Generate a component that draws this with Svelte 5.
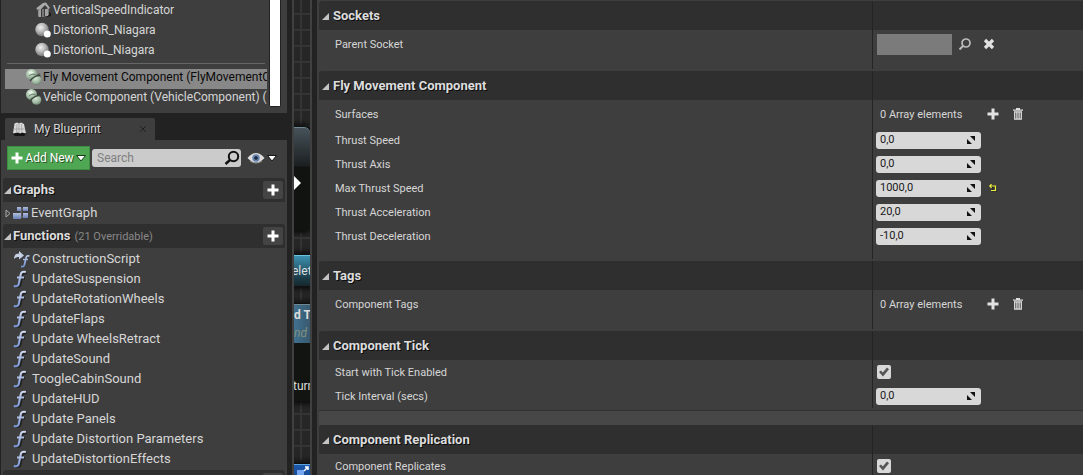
<script>
  let components = [
    { name: 'VerticalSpeedIndicator', icon: 'house' },
    { name: 'DistorionR_Niagara', icon: 'sphere' },
    { name: 'DistorionL_Niagara', icon: 'sphere' }
  ];
  let logic = [
    { name: 'Fly Movement Component (FlyMovementComponent)', selected: true },
    { name: 'Vehicle Component (VehicleComponent) (Inherited)', selected: false }
  ];
  let functions = [
    'ConstructionScript', 'UpdateSuspension', 'UpdateRotationWheels', 'UpdateFlaps',
    'Update WheelsRetract', 'UpdateSound', 'ToogleCabinSound', 'UpdateHUD',
    'Update Panels', 'Update Distortion Parameters', 'UpdateDistortionEffects'
  ];
  let sections = [
    { title: 'Sockets', rows: [{ id: 'socket', label: 'Parent Socket', kind: 'socket' }] },
    {
      title: 'Fly Movement Component',
      rows: [
        { id: 'surfaces', label: 'Surfaces', kind: 'array' },
        { id: 'speed', label: 'Thrust Speed', kind: 'number', value: '0,0' },
        { id: 'axis', label: 'Thrust Axis', kind: 'number', value: '0,0' },
        { id: 'max', label: 'Max Thrust Speed', kind: 'number', value: '1000,0', changed: true },
        { id: 'accel', label: 'Thrust Acceleration', kind: 'number', value: '20,0' },
        { id: 'decel', label: 'Thrust Deceleration', kind: 'number', value: '-10,0' }
      ]
    },
    { title: 'Tags', rows: [{ id: 'tags', label: 'Component Tags', kind: 'array' }] },
    {
      title: 'Component Tick',
      advanced: true,
      rows: [
        { id: 'tick', label: 'Start with Tick Enabled', kind: 'check' },
        { id: 'interval', label: 'Tick Interval (secs)', kind: 'number', value: '0,0' }
      ]
    },
    { title: 'Component Replication', rows: [{ id: 'replicates', label: 'Component Replicates', kind: 'check' }] }
  ];
</script>

{#snippet plus()}
  <svg width="12" height="12" viewBox="0 0 12 12" aria-hidden="true"><path d="M4.500.5h3v4h4v3h-4v4h-3v-4h-4v-3h4z" fill="currentColor" /></svg>
{/snippet}

{#snippet fn()}
  <svg class="fn" width="16" height="18" viewBox="0 0 16 18" aria-hidden="true">
    <path d="M3 15.500c2 .8 3.200 0 3.700-2.500L8.200 5c.5-2.500 2-3.300 4.300-2.500M5 7.500h6" transform="translate(1 1)" fill="none" stroke="#222" stroke-width="2" />
    <path d="M.8 16c3 .8 4.700 0 5.200-3L7.600 5c.5-2.800 2-3.700 5.200-3M4 7.500h7" fill="none" stroke="url(#fnfill)" stroke-width="2" />
  </svg>
{/snippet}

<svg class="defs" width="0" height="0" aria-hidden="true">
  <defs>
    <linearGradient id="fnfill" gradientUnits="userSpaceOnUse" x1="0" y1="0" x2="0" y2="18"><stop offset="0" stop-color="#dbe2f2" /><stop offset="1" stop-color="#6f8fd4" /></linearGradient>
    <radialGradient id="ball" cx=".4" cy=".35" r=".65"><stop offset="0" stop-color="#eee" /><stop offset=".5" stop-color="#b9b9b9" /><stop offset="1" stop-color="#777" /></radialGradient>
    <radialGradient id="green" cx=".4" cy=".3" r=".8"><stop offset="0" stop-color="#d5e8d5" /><stop offset=".6" stop-color="#a0b8a2" /><stop offset="1" stop-color="#5d725f" /></radialGradient>
    <linearGradient id="tile" x1="0" y1="0" x2="0" y2="1"><stop offset="0" stop-color="#b4bfdc" /><stop offset="1" stop-color="#667eb8" /></linearGradient>
  </defs>
</svg>

<div class="editor">
  <aside class="side">
    <section class="tree">
      <div class="list">
        {#each components as item}
          <div class="node deep">
            {#if item.icon === 'house'}
              <svg width="18" height="18" viewBox="0 0 18 18" aria-hidden="true">
                <path d="M11 10l5 2v3l-4 1z" fill="#1c1c1c" />
                <path d="M3 8v7l3 1V9zM8 8v8l6-2V7z" fill="#777" />
                <path d="M1.500 7L8 2l3-.5L15 7l-1.500 1L10 4 5 9.500 4 8 2 9z" fill="#aaa" />
                <path d="M6 8.500L9.500 5 12 8v7H6z" fill="#3a3a3a" /><path d="M3.500 9h2.500v7H3.500zM10 8h3v7h-3z" fill="#a3a3a3" /><path d="M7 8h2v8H7z" fill="#777" />
              </svg>
            {:else}
              <svg width="18" height="18" viewBox="0 0 18 18" aria-hidden="true">
                <circle cx="7" cy="8.500" r="6.700" fill="url(#ball)" /><circle cx="12.300" cy="13" r="3.500" fill="#fff" />
              </svg>
            {/if}
            <span>{item.name}</span>
          </div>
        {/each}
        <hr />
        {#each logic as item}
          <div class="node logic" class:selected={item.selected}>
            <svg width="18" height="18" viewBox="0 0 18 18" aria-hidden="true">
              <path d="M9 8l6-3 1 5-6 7z" fill="#333" opacity=".5" />
              <circle cx="6.500" cy="6.500" r="5.500" fill="url(#green)" /><circle cx="11.500" cy="12" r="4.800" fill="url(#green)" />
              <path d="M5 13Q9 7.500 15 7.500" fill="none" stroke="#3b4a3c" stroke-width="1.300" /><path d="M3 5l3-2 3 1.500-3 1.500z" fill="#eaf6ea" /><path d="M4 8l3-2 4 1" fill="none" stroke="#6b806c" />
            </svg>
            <span>{item.name}</span>
          </div>
        {/each}
      </div>
      <div class="scroll"></div>
    </section>

    <div class="tabs">
      <div class="tab">
        <svg width="16" height="16" viewBox="0 0 16 16" aria-hidden="true">
          <path d="M1 12h15l-3 3H4z" fill="#141414" />
          <path d="M3.500 2.500l2.500-1 2 1 2-1 3 1.500 2 9.500-4-1-2 1-2-1-5 1z" fill="#d8d8d8" />
          <path d="M6 3l-.5 9M8 3v9M10.500 3l.5 9M2.500 8h11" stroke="#999" stroke-width=".7" />
        </svg>
        <span>My Blueprint</span>
        <button class="close" aria-label="Close"><svg width="8" height="8" viewBox="0 0 8 8"><path d="M1 1l6 6M7 1L1 7" stroke="#222" /></svg></button>
      </div>
    </div>

    <section class="blueprint">
      <div class="tools">
        <button class="add">
          {@render plus()}
          <span>Add New</span>
          <svg width="10" height="8" viewBox="0 0 10 8" aria-hidden="true"><path d="M.5 1.500h9L5 7z" fill="#fff" stroke="#163f19" /></svg>
        </button>
        <div class="search">
          <input type="text" placeholder="Search" aria-label="Search" />
          <svg width="16" height="16" viewBox="0 0 16 16" aria-hidden="true"><circle cx="9.500" cy="6.500" r="4.700" fill="none" stroke="#111" stroke-width="2" /><path d="M6 10l-4.500 4" stroke="#111" stroke-width="2.500" /></svg>
        </div>
        <button class="view" aria-label="View options">
          <svg width="18" height="14" viewBox="0 0 18 14"><path d="M.5 7Q9-3 17.500 7 9 16 .5 7z" fill="#ddd" /><path d="M3 10q6 4 12 0" fill="none" stroke="#999" /><circle cx="9" cy="7" r="3.700" fill="#6582ac" /><circle cx="9" cy="7" r="1.800" fill="#182335" /></svg>
          <svg width="10" height="8" viewBox="0 0 10 8"><path d="M.5 1.500h9L5 7z" fill="#fff" stroke="#171717" /></svg>
        </button>
      </div>

      <div class="category">
        <svg width="7" height="7" viewBox="0 0 7 7" aria-hidden="true"><path d="M7 0v7H0z" fill="#c4c4c4" /></svg>
        <h2>Graphs</h2>
        <button aria-label="Add graph">{@render plus()}</button>
      </div>
      <div class="graph-row">
        <svg width="6" height="9" viewBox="0 0 6 9" aria-hidden="true"><path d="M1 1l4 3.500L1 8z" fill="none" stroke="#aaa" /></svg>
        <svg width="18" height="14" viewBox="0 0 18 14" aria-hidden="true">
          <path d="M5 3h7M9 4v7h4" fill="none" stroke="#777" />
          <rect x="5" y="1" width="4" height="4" fill="url(#tile)" /><rect x="11" y="1" width="5" height="4" fill="url(#tile)" /><rect x="1" y="7" width="8" height="6" fill="url(#tile)" /><rect x="11" y="7" width="5" height="5" fill="url(#tile)" />
        </svg>
        <span>EventGraph</span>
      </div>
      <div class="category">
        <svg width="7" height="7" viewBox="0 0 7 7" aria-hidden="true"><path d="M7 0v7H0z" fill="#c4c4c4" /></svg>
        <h2>Functions</h2>
        <small>(21 Overridable)</small>
        <button aria-label="Add function">{@render plus()}</button>
      </div>
      <ul>
        {#each functions as name, i}
          <li>
            {#if i === 0}
              <svg width="18" height="18" viewBox="0 0 18 18" aria-hidden="true">
                <path d="M8 16.500c2 .5 3 0 3.500-2L13 8c.4-2 1.500-2.500 3.500-2M10 9.500h5" fill="none" stroke="url(#fnfill)" stroke-width="1.700" />
                <path d="M1 9c0-4 2-5.500 5-5.500V1l5 4.500-5 4V7C4 7 2.500 7.500 1 9z" fill="#c6cfe3" />
              </svg>
            {:else}
              {@render fn()}
            {/if}
            <span>{name}</span>
          </li>
        {/each}
      </ul>
      <div class="category"><button aria-label="Add macro">{@render plus()}</button></div>
    </section>
  </aside>

  <div class="canvas">
    <div class="bp first"><svg width="8" height="14" viewBox="0 0 8 14" aria-hidden="true"><path d="M0 0l7 7-7 7z" fill="#fff" /></svg></div>
    <div class="bp second"><span>elet</span></div>
    <div class="bp third"><header><b>d T</b><i>nd</i></header><span>turn</span></div>
    <div class="bp fourth">
      <svg width="16" height="12" viewBox="0 0 16 12" aria-hidden="true"><path d="M3 5h7v5H3z" fill="#76a6f0" /><path d="M10 6l4-4M11 2h3v3" fill="none" stroke="#fff" stroke-width="1.500" /></svg>
    </div>
  </div>

  <main class="details">
    {#each sections as section}
      <section class="group" class:advanced={section.advanced}>
        <div class="head">
          <h2><svg width="7" height="7" viewBox="0 0 7 7" aria-hidden="true"><path d="M7 0v7H0z" fill="#c4c4c4" /></svg>{section.title}</h2>
          <div class="cell"></div>
        </div>
        {#each section.rows as row}
          <div class="row {row.kind}">
            {#if row.kind === 'number' || row.kind === 'check' || row.kind === 'socket'}
              <label for={row.id}>{row.label}</label>
            {:else}
              <div class="label">{row.label}</div>
            {/if}
            <div class="cell">
              {#if row.kind === 'number'}
                <div class="spin">
                  <input id={row.id} type="text" value={row.value} />
                  <svg width="8" height="8" viewBox="0 0 8 8" aria-hidden="true"><path d="M3 0h5v5zM0 3v5h5z" fill="#111" /></svg>
                </div>
                {#if row.changed}
                  <button class="reset" aria-label="Reset to default"><svg width="8" height="8" viewBox="0 0 8 8"><path d="M2.500 0v5M1 2h6v5H2" transform="translate(1 1)" fill="none" stroke="#222" /><path d="M2.500 0L1 2l1.500 2M0 2h6.500v4.500H2" fill="none" stroke="#eeee3c" stroke-width="1.200" /></svg></button>
                {/if}
              {:else if row.kind === 'check'}
                <input id={row.id} type="checkbox" checked />
              {:else if row.kind === 'array'}
                <span class="count">0 Array elements</span>
                <button aria-label="Add element">{@render plus()}</button>
                <button aria-label="Remove all elements"><svg width="10" height="12" viewBox="0 0 10 12"><path d="M0 1.500h3V0h4v1.500h3v1.300H0z" fill="#ddd" /><path d="M1.700 4v7.200h6.600V4M3.900 4v7M6.100 4v7M1 3.900h8" fill="none" stroke="#ddd" stroke-width="1.300" /></svg></button>
              {:else}
                <input id={row.id} class="socket-name" type="text" readonly />
                <button aria-label="Browse"><svg width="12" height="12" viewBox="0 0 12 12"><circle cx="7" cy="5" r="4" fill="none" stroke="#bbb" stroke-width="1.700" /><path d="M4 8l-3.500 3.500" stroke="#bbb" stroke-width="2" /></svg></button>
                <button aria-label="Clear"><svg width="12" height="12" viewBox="0 0 12 12"><path d="M2 2l8 8M10 2l-8 8" stroke="#e2e2e2" stroke-width="3.200" /></svg></button>
              {/if}
            </div>
          </div>
        {/each}
      </section>
    {/each}
  </main>
</div>

<style>
  :global(body) { margin: 0; background: #222; overflow: hidden; }
  * { box-sizing: border-box; }
  .defs { position: absolute; }
  .editor { display: flex; height: 100vh; overflow: hidden; background: #222; color: #d6d6d6; font: 13px/20px Roboto, sans-serif; }
  button { display: flex; align-items: center; justify-content: center; padding: 0; border: 0; background: none; color: #e2e2e2; font: inherit; }
  input { font: inherit; padding: 0; border: 0; outline: 0; }
  svg { flex: none; }
  h2 { margin: 0; font-size: 13px; line-height: 20px; font-weight: 700; color: #ddd; text-shadow: 1px 1px 0 #0c0c0c; }

  .side { flex: none; width: 287px; padding-left: 1px; }
  .tree { display: flex; height: 113px; background: #3e3e3e; }
  .list { width: 266px; padding-left: 4px; overflow: hidden; }
  .node { display: flex; align-items: center; height: 20px; padding-left: 20px; white-space: nowrap; font-size: 12px; }
  .node.deep { padding-left: 30px; }
  .node.logic { padding-bottom: 4px; }
  .node span { flex: none; }
  .selected { background: #888; color: #080808; }
  hr { height: 1px; margin: 3px 2px 5px; border: 0; background: #666; }
  .scroll { width: 12px; height: 107px; margin-left: 2px; border: 1px solid #222; border-top: 0; border-radius: 0 0 2px 2px; background: #fff; }

  .tabs { height: 27px; padding: 5px 0 0 4px; background: #222; }
  .tab { display: flex; align-items: center; gap: 7px; width: 150px; height: 22px; padding: 0 8px 0 6px; border-radius: 2px 2px 0 0; background: #3e3e3e; font-size: 12px; text-shadow: 1px 1px 0 #111; }
  .close { margin-left: auto; }

  .blueprint { padding: 6px 2px 0; background: #3e3e3e; }
  .tools { display: flex; align-items: center; height: 24px; margin-bottom: 8px; padding-left: 4px; gap: 2px; }
  .add { gap: 2px; width: 83px; height: 24px; border: 1px solid #3e8f42; background: #4fa653; color: #fff; font-size: 12px; }
  .add span { text-shadow: 1px 1px 0 #28592a; }
  .search { display: flex; align-items: center; width: 149px; height: 18px; padding: 0 1px 0 5px; border-radius: 3px; background: #cbcbcb; }
  .search input { flex: 1; min-width: 0; background: none; font-size: 12px; }
  .search input::placeholder { color: #808080; opacity: 1; }
  .view { gap: 2px; margin-left: 4px; }
  .category { display: flex; align-items: center; height: 24px; padding: 0 2px 0 1px; gap: 2px; border-radius: 3px 3px 0 0; background: #2f2f2f; }
  .category small { margin-left: 2px; padding-top: 2px; color: #888; font-size: 11px; }
  .category button { width: 20px; height: 18px; margin-left: auto; border-radius: 2px; background: #444; color: #fff; }
  .graph-row { display: flex; align-items: center; gap: 1px; height: 22px; padding-left: 2px; }
  ul { margin: 0 0 2px; padding: 0; list-style: none; }
  li { display: flex; align-items: center; height: 20px; padding: 2px 0 0 10px; }
  li span { margin-left: 1px; }
  .fn { margin-right: 2px; }

  .canvas { position: relative; flex: none; width: 20px; margin: 0 5px; overflow: hidden; border: 2px solid #404040; border-width: 0 2px; background: linear-gradient(90deg, transparent 6px, #343434 6px, #343434 8px, transparent 8px), repeating-linear-gradient(180deg, transparent 0 13px, #343434 13px 15px, transparent 15px 16px), #262626; font-size: 12px; line-height: 16px; white-space: nowrap; color: #ddd; }
  .bp { position: absolute; left: -4px; width: 30px; overflow: hidden; border-top: 1px solid #6f8791; box-shadow: 0 0 5px 3px #0b0b0b; background: #111411; }
  .first { top: 127px; left: -14px; height: 103px; border-radius: 0 6px 6px 0; background: linear-gradient(#46525a, #1b1f20 38px, #101310 39px); }
  .first svg { position: absolute; left: 14px; top: 48px; }
  .second { top: 255px; height: 31px; padding-top: 7px; padding-left: 2px; border-color: #6ac5df; background: linear-gradient(#3c91b0, #1b3c49 22px, #16272c); }
  .third { top: 304px; height: 97px; }
  .third header { display: grid; height: 38px; padding: 2px 0 0 4px; background: linear-gradient(90deg, #427696, #344b5c); }
  .third i { color: #82917c; }
  .third > span { display: block; margin-top: 35px; padding-left: 3px; }
  .fourth { top: 464px; height: 40px; padding-left: 4px; border-color: #5fa5dc; background: linear-gradient(#1d58ab, #123061); }

  .details { flex: 1; min-width: 0; padding: 1px 0 0 2px; background: #3e3e3e; font-size: 11px; }
  .group { padding-bottom: 2px; }
  .head, .row { display: grid; grid-template-columns: minmax(0, 1fr) 211px; }
  .head { height: 29px; border-radius: 3px 0 0; background: #2f2f2f; }
  .head h2 { display: flex; align-items: center; gap: 4px; padding-left: 3px; }
  .head svg { margin-top: 2px; }
  .row { min-height: 24px; }
  .row label, .row .label { display: flex; align-items: center; padding: 2px 0 0 16px; }
  .row .cell { display: flex; align-items: center; padding-left: 3px; }
  .cell { border-left: 1px solid #242424; }
  .array, .socket { min-height: 28px; }
  .row:last-child { min-height: 35px; }
  .array:last-child, .socket:last-child { min-height: 39px; }
  .row:last-child > * { padding-bottom: 11px; }
  .advanced .row:last-child { min-height: 24px; }
  .advanced .row:last-child > * { padding-bottom: 0; }
  .advanced::after { content: ''; display: block; height: 14px; margin: 2px 0 -2px; border-top: 1px solid #313131; background: #474747; }
  .spin { display: flex; align-items: center; width: 105px; height: 17px; padding: 0 6px 0 4px; border-radius: 3px; background: #d8d8d8; }
  .spin input { flex: 1; min-width: 0; background: none; color: #181818; }
  .reset { margin-left: 8px; }
  .count { width: 107px; padding: 1px 0 0 4px; }
  .array button { width: 20px; margin-right: 5px; }
  .socket-name { width: 75px; height: 21px; margin: 0 7px 0 1px; background: #7b7b7b; }
  .socket button { margin-right: 12px; }
  input[type='checkbox'] { appearance: none; width: 14px; height: 14px; margin: 0 0 0 1px; border-radius: 2px; background: #d8d8d8; }
  input[type='checkbox']:checked::before { content: ''; display: block; width: 10px; height: 10px; margin: 2px; background: #555; clip-path: polygon(0 50%, 20% 35%, 38% 55%, 80% 5%, 100% 22%, 40% 95%); }
</style>
